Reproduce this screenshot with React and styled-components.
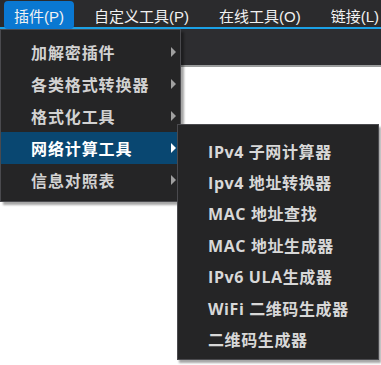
import React from 'react';
import styled, { createGlobalStyle } from 'styled-components';

const GlobalStyle = createGlobalStyle`
  html, body {
    margin: 0;
    padding: 0;
    background: #ffffff;
  }
  body {
    font-family: 'Liberation Sans', 'Noto Sans CJK SC', sans-serif;
  }
`;

const barItems = ['插件(P)', '自定义工具(P)', '在线工具(O)', '链接(L)'];

const menuItems = ['加解密插件', '各类格式转换器', '格式化工具', '网络计算工具', '信息对照表'];

const subItems = [
  'IPv4 子网计算器',
  'Ipv4 地址转换器',
  'MAC 地址查找',
  'MAC 地址生成器',
  'IPv6 ULA生成器',
  'WiFi 二维码生成器',
  '二维码生成器',
];

const App = () => {
  return (
    <Page>
      <GlobalStyle />
      <MenuBar>
        {barItems.map((label, i) => (
          <BarItem key={label} active={i === 0}>
            {label}
          </BarItem>
        ))}
      </MenuBar>
      <Toolbar />

      <Dropdown>
        {menuItems.map((label) => (
          <MenuItem key={label} active={label === '网络计算工具'}>
            <span>{label}</span>
            <Arrow active={label === '网络计算工具'} />
            {label === '网络计算工具' && (
              <SubMenu>
                {subItems.map((item) => (
                  <SubItem key={item}>{item}</SubItem>
                ))}
              </SubMenu>
            )}
          </MenuItem>
        ))}
      </Dropdown>
    </Page>
  );
};

export default App;

const Page = styled.div`
  position: relative;
  width: 381px;
  height: 365px;
  overflow: hidden;
  background: #ffffff;
`;

const MenuBar = styled.div`
  display: flex;
  align-items: stretch;
  gap: 10px;
  height: 27px;
  padding-left: 4px;
  background: #2b2b2d;
  border-bottom: 2px solid #1ba1e6;
  white-space: nowrap;
`;

const BarItem = styled.div`
  display: flex;
  align-items: center;
  padding: 1px 10px 0;
  margin-top: 1px;
  margin-bottom: -2px;
  font-size: 15px;
  color: #f2f2f2;
  border-radius: 4px;
  background: ${({ active }) => (active ? '#0a78d2' : 'transparent')};
`;

const Toolbar = styled.div`
  height: 36px;
  background: #2d2d30;
  border-bottom: 2px solid #9a9c9c;
`;

const Dropdown = styled.div`
  position: absolute;
  top: 29px;
  left: 0;
  width: 179px;
  padding: 6px 0 5px;
  background: #252526;
  border: 1px solid #4a4a4e;
  box-shadow: 3px 3px 2px rgba(0, 0, 0, 0.35);
`;

const MenuItem = styled.div`
  position: relative;
  display: flex;
  align-items: center;
  justify-content: space-between;
  height: 32px;
  padding: 0 4px 0 30px;
  font-family: 'Noto Sans CJK SC', sans-serif;
  font-size: 16px;
  font-weight: 700;
  letter-spacing: 0.9px;
  color: ${({ active }) => (active ? '#ffffff' : '#d2d2d2')};
  background: ${({ active }) => (active ? '#094771' : 'transparent')};
`;

const Arrow = styled.span`
  width: 0;
  height: 0;
  border-top: 5px solid transparent;
  border-bottom: 5px solid transparent;
  border-left: 5px solid ${({ active }) => (active ? '#ffffff' : '#a0a0a0')};
`;

const SubMenu = styled.div`
  position: absolute;
  top: -8px;
  left: 176px;
  width: 200px;
  padding: 10px 0 4px;
  background: #252526;
  border: 1px solid #4a4a4e;
  box-shadow: 2px 3px 2px rgba(0, 0, 0, 0.35);
  z-index: 2;
`;

const SubItem = styled.div`
  display: flex;
  align-items: center;
  height: 31.4px;
  padding-left: 30px;
  font-family: 'Open Sans', 'Noto Sans CJK SC', sans-serif;
  font-size: 16px;
  font-weight: 700;
  letter-spacing: 0.6px;
  color: #d8d8d8;
  white-space: nowrap;
`;
